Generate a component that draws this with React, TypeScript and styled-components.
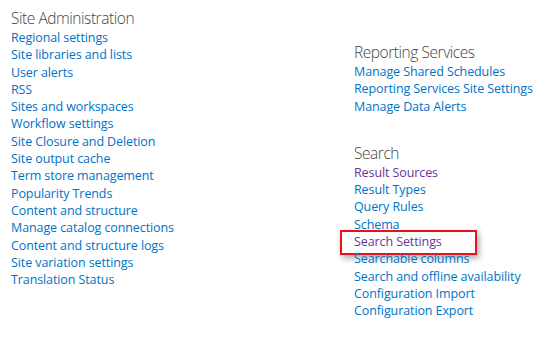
import React from 'react';
import styled, { createGlobalStyle } from 'styled-components';

const GlobalStyle = createGlobalStyle`
  html, body {
    margin: 0;
    padding: 0;
    background: #fff;
  }
  body {
    font-family: "Open Sans", "Liberation Sans", sans-serif;
  }
`;

const Page = styled.div`
  width: 550px;
  height: 359px;
  display: grid;
  grid-template-columns: 343px 1fr;
  padding: 8px 0 0 11px;
  box-sizing: border-box;
`;

const Column = styled.div<{ offset?: number }>`
  display: flex;
  flex-direction: column;
  padding-top: ${p => p.offset ?? 0}px;
`;

const Section = styled.div`
  display: flex;
  flex-direction: column;
  margin-bottom: 28px;
`;

const Heading = styled.h3`
  margin: 0 0 1px;
  font-size: 15.5px;
  font-weight: 300;
  line-height: 20px;
  color: #444;
  letter-spacing: -0.45px;
`;

const LinkList = styled.ul`
  list-style: none;
  margin: 0;
  padding: 0;
`;

const Item = styled.li<{ highlight?: boolean }>`
  position: relative;
  font-size: 12.5px;
  line-height: 17.3px;
  letter-spacing: -0.1px;

  ${p =>
    p.highlight &&
    `
    &::after {
      content: '';
      position: absolute;
      left: -14px;
      top: -3px;
      width: 133px;
      height: 21px;
      border: 2px solid #e8141b;
      box-shadow: 2px 3px 6px rgba(0, 0, 0, 0.35);
      pointer-events: none;
    }
  `}
`;

const LinkText = styled.a<{ visited?: boolean }>`
  color: ${p => (p.visited ? '#69349a' : '#0072c6')};
  text-decoration: none;
  white-space: nowrap;
`;

type LinkDef = { label: string; visited?: boolean; highlight?: boolean };

const adminLinks: LinkDef[] = [
  { label: 'Regional settings' },
  { label: 'Site libraries and lists' },
  { label: 'User alerts' },
  { label: 'RSS' },
  { label: 'Sites and workspaces' },
  { label: 'Workflow settings' },
  { label: 'Site Closure and Deletion' },
  { label: 'Site output cache' },
  { label: 'Term store management' },
  { label: 'Popularity Trends' },
  { label: 'Content and structure' },
  { label: 'Manage catalog connections' },
  { label: 'Content and structure logs' },
  { label: 'Site variation settings' },
  { label: 'Translation Status' },
];

const reportingLinks: LinkDef[] = [
  { label: 'Manage Shared Schedules' },
  { label: 'Reporting Services Site Settings' },
  { label: 'Manage Data Alerts' },
];

const searchLinks: LinkDef[] = [
  { label: 'Result Sources', visited: true },
  { label: 'Result Types' },
  { label: 'Query Rules' },
  { label: 'Schema' },
  { label: 'Search Settings', visited: true, highlight: true },
  { label: 'Searchable columns' },
  { label: 'Search and offline availability' },
  { label: 'Configuration Import' },
  { label: 'Configuration Export' },
];

const Group: React.FC<{ title: string; links: LinkDef[] }> = ({ title, links }) => (
  <Section>
    <Heading>{title}</Heading>
    <LinkList>
      {links.map(l => (
        <Item key={l.label} highlight={l.highlight}>
          <LinkText href="#" visited={l.visited}>
            {l.label}
          </LinkText>
        </Item>
      ))}
    </LinkList>
  </Section>
);

export default function App() {
  return (
    <>
      <GlobalStyle />
      <Page>
        <Column>
          <Group title="Site Administration" links={adminLinks} />
        </Column>
        <Column offset={34}>
          <Group title="Reporting Services" links={reportingLinks} />
          <Group title="Search" links={searchLinks} />
        </Column>
      </Page>
    </>
  );
}
